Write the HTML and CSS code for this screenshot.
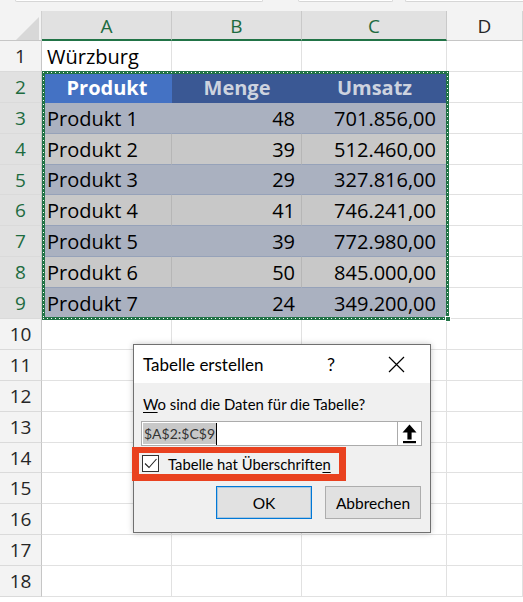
FILE: index.html
```html
<!DOCTYPE html>
<html lang="de">
<head>
<meta charset="utf-8">
<title>Tabelle erstellen</title>
<link rel="stylesheet" href="styles.css">
</head>
<body>
<div class="topbar"><span class="tb tb1"></span><span class="tb tb2"></span><span class="tb tb3"></span></div>
<div class="sheet">
  <div class="corner"><svg width="42" height="30" viewBox="0 0 42 30"><polygon points="16,29 39,29 39,6" fill="#d8d8d8"/></svg></div>
  <div class="ch sel">A</div><div class="ch sel">B</div><div class="ch sel">C</div><div class="ch">D</div>

  <div class="rh">1</div><div class="c">Würzburg</div><div class="c"></div><div class="c"></div><div class="c"></div>
  <div class="rh sel">2</div><div class="c th active">Produkt</div><div class="c th">Menge</div><div class="c th">Umsatz</div><div class="c"></div>
  <div class="rh sel">3</div><div class="c b1">Produkt 1</div><div class="c b1 num">48</div><div class="c b1 num numc">701.856,00</div><div class="c"></div>
  <div class="rh sel">4</div><div class="c b2">Produkt 2</div><div class="c b2 num">39</div><div class="c b2 num numc">512.460,00</div><div class="c"></div>
  <div class="rh sel">5</div><div class="c b1">Produkt 3</div><div class="c b1 num">29</div><div class="c b1 num numc">327.816,00</div><div class="c"></div>
  <div class="rh sel">6</div><div class="c b2">Produkt 4</div><div class="c b2 num">41</div><div class="c b2 num numc">746.241,00</div><div class="c"></div>
  <div class="rh sel">7</div><div class="c b1">Produkt 5</div><div class="c b1 num">39</div><div class="c b1 num numc">772.980,00</div><div class="c"></div>
  <div class="rh sel">8</div><div class="c b2">Produkt 6</div><div class="c b2 num">50</div><div class="c b2 num numc">845.000,00</div><div class="c"></div>
  <div class="rh sel">9</div><div class="c b1">Produkt 7</div><div class="c b1 num">24</div><div class="c b1 num numc">349.200,00</div><div class="c"></div>
  <div class="rh">10</div><div class="c"></div><div class="c"></div><div class="c"></div><div class="c"></div>
  <div class="rh">11</div><div class="c"></div><div class="c"></div><div class="c"></div><div class="c"></div>
  <div class="rh">12</div><div class="c"></div><div class="c"></div><div class="c"></div><div class="c"></div>
  <div class="rh">13</div><div class="c"></div><div class="c"></div><div class="c"></div><div class="c"></div>
  <div class="rh">14</div><div class="c"></div><div class="c"></div><div class="c"></div><div class="c"></div>
  <div class="rh">15</div><div class="c"></div><div class="c"></div><div class="c"></div><div class="c"></div>
  <div class="rh">16</div><div class="c"></div><div class="c"></div><div class="c"></div><div class="c"></div>
  <div class="rh">17</div><div class="c"></div><div class="c"></div><div class="c"></div><div class="c"></div>
  <div class="rh">18</div><div class="c"></div><div class="c"></div><div class="c"></div><div class="c"></div>

  <div class="marquee"><span class="handle"></span></div>
</div>

<div class="dialog">
  <div class="dlg-title">
    <span class="ttl">Tabelle erstellen</span>
    <span class="help">?</span>
    <svg class="close" width="17" height="17" viewBox="0 0 17 17"><path d="M1 1 L16 16 M16 1 L1 16" stroke="#000" stroke-width="1.2" fill="none"/></svg>
  </div>
  <div class="dlg-body">
    <div class="lbl"><u>W</u>o sind die Daten für die Tabelle?</div>
    <div class="field">
      <span class="seltext">$A$2:$C$9</span><span class="caret"></span>
      <span class="pick"><svg width="15" height="20" viewBox="0 0 15 20"><path d="M7.5 0.5 L14.5 8.5 L9.6 8.5 L9.6 15.5 L5.4 15.5 L5.4 8.5 L0.5 8.5 Z" fill="#000"/><rect x="1" y="17" width="13" height="2.2" fill="#000"/></svg></span>
    </div>
    <div class="hl">
      <span class="cb"><svg width="15" height="15" viewBox="0 0 15 15"><path d="M2 7.5 L6 11.5 L13.5 3" stroke="#222" stroke-width="1.1" fill="none"/></svg></span>
      <span class="cbl">Tabelle hat Überschrifte<u>n</u></span>
    </div>
    <div class="btns">
      <button class="btn ok">OK</button>
      <button class="btn">Abbrechen</button>
    </div>
  </div>
</div>
</body>
</html>
```

FILE: styles.css
```css
* { box-sizing: border-box; }
html, body { margin: 0; padding: 0; }
body {
  width: 523px;
  height: 602px;
  overflow: hidden;
  background: #fff;
  font-family: "Open Sans", "Liberation Sans", sans-serif;
  position: relative;
}

.topbar {
  height: 11px;
  background: #f3f3f3;
  display: flex;
  align-items: flex-start;
}
.tb {
  height: 2px;
  background: #fff;
  border: 1px solid #d6d6d6;
  border-top: 0;
  border-radius: 0 0 3px 3px;
}
.tb1 { margin-left: 15px; width: 248px; }
.tb2 { margin-left: 35px; width: 95px; }
.tb3 { margin-left: 12px; flex: 1; border-right: 0; border-radius: 0 0 0 3px; }

.sheet {
  position: relative;
  display: grid;
  grid-template-columns: 42px 130px 130px 145px 1fr;
  grid-template-rows: 30px repeat(18, 30.9px);
  font-size: 20px;
  color: #000;
}

.corner {
  background: #f3f3f3;
  border-right: 1px solid #d0d0d0;
  border-bottom: 1px solid #c6c6c6;
  overflow: hidden;
}
.corner svg { display: block; }

.ch {
  display: flex;
  align-items: center;
  justify-content: center;
  font-size: 19px;
  color: #262626;
  background: #f3f3f3;
  border-right: 1px solid #d4d4d4;
  border-bottom: 1px solid #c6c6c6;
  padding-top: 1px;
}
.ch.sel {
  background: #e1e1e1;
  color: #1d6b40;
  border-right-color: #c9c9c9;
  border-bottom: 2px solid #217346;
  padding-top: 2px;
}

.rh {
  display: flex;
  align-items: center;
  justify-content: center;
  font-size: 19px;
  color: #262626;
  background: #f3f3f3;
  border-right: 1px solid #c6c6c6;
  border-bottom: 1px solid #dadada;
}
.rh.sel {
  background: #e1e1e1;
  color: #1d6b40;
}

.c {
  display: flex;
  align-items: flex-end;
  padding: 0 4px 2px 5px;
  line-height: 24px;
  white-space: nowrap;
  border-right: 1px solid #e1e1e1;
  border-bottom: 1px solid #e1e1e1;
}
.num { justify-content: flex-end; padding-right: 6px; }
.numc { padding-right: 10px; }

.th {
  justify-content: center;
  font-weight: 700;
  color: #cdd3df;
  background: #3a5894;
  border-right-color: #3a5894;
  border-bottom-color: #3a5894;
}
.th.active {
  color: #fff;
  background: #4472c4;
  border-right-color: #4472c4;
  border-bottom-color: #4472c4;
}
.b1 {
  background: #aab1c0;
  border-right-color: #aab1c0;
  border-bottom-color: #96a2b9;
}
.b2 {
  background: #c8c8c8;
  border-right-color: #b6b6b6;
  border-bottom-color: #96a2b9;
}

.marquee {
  position: absolute;
  left: 42px;
  top: 60px;
  width: 407px;
  height: 249px;
  border: 3px solid #217346;
  pointer-events: none;
}
.marquee::after {
  content: "";
  position: absolute;
  inset: -2px;
  background:
    repeating-linear-gradient(90deg, #fff 0 1px, transparent 1px 4px) top left / 100% 1px no-repeat,
    repeating-linear-gradient(90deg, #fff 0 1px, transparent 1px 4px) bottom left / 100% 1px no-repeat,
    repeating-linear-gradient(180deg, #fff 0 1px, transparent 1px 4px) top left / 1px 100% no-repeat,
    repeating-linear-gradient(180deg, #fff 0 1px, transparent 1px 4px) top right / 1px 100% no-repeat;
}
.handle {
  position: absolute;
  right: -5px;
  bottom: -5px;
  width: 6px;
  height: 6px;
  background: #217346;
  border: 1px solid #fff;
  z-index: 1;
}

/* dialog */
.dialog {
  position: absolute;
  left: 133px;
  top: 344px;
  width: 298px;
  height: 189px;
  border: 1px solid #707070;
  box-shadow: 0 0 6px rgba(0, 0, 0, 0.22);
  background: #f0f0f0;
  font-family: Lato, "Open Sans", sans-serif;
  font-size: 15px;
  color: #000;
  display: flex;
  flex-direction: column;
}
.dlg-title {
  height: 38px;
  background: #fff;
  display: flex;
  align-items: center;
  padding-left: 9px;
}
.ttl { flex: 1; font-size: 17px; }
.help { width: 12px; margin-right: 49px; font-size: 18px; }
.close { margin-right: 25px; display: block; }

.dlg-body {
  flex: 1;
  display: flex;
  flex-direction: column;
  padding: 12px 8px 0 7px;
}
.lbl { padding-left: 2px; line-height: 19px; font-size: 14.9px; }
.lbl u { text-underline-offset: 2px; }

.field {
  margin-top: 7px;
  height: 25px;
  background: #fff;
  border: 1px solid #ababab;
  display: flex;
  align-items: center;
}
.seltext {
  margin-left: 1px;
  height: 21px;
  line-height: 21px;
  padding: 0 1px;
  background: #c8c8c8;
  color: #333;
  font-size: 14px;
}
.caret {
  width: 1px;
  height: 22px;
  background: #000;
}
.pick {
  margin: -1px -1px -1px auto;
  width: 25px;
  height: 25px;
  background: #fff;
  border: 1px solid #ababab;
  display: flex;
  align-items: center;
  justify-content: center;
}
.pick svg { display: block; }

.hl {
  margin-top: 1px;
  margin-left: -9px;
  width: 214px;
  height: 34px;
  border: 7px solid #e9411f;
  border-top-width: 6px;
  display: flex;
  align-items: center;
}
.cb {
  margin-left: 3px;
  width: 17px;
  height: 17px;
  border: 1px solid #333;
  background: #fff;
  display: flex;
  align-items: center;
  justify-content: center;
}
.cb svg { display: block; }
.cbl { margin-left: 9px; white-space: nowrap; font-size: 14.8px; }
.cbl u { text-underline-offset: 2px; }

.btns {
  margin-top: 5px;
  margin-right: 1px;
  display: flex;
  justify-content: flex-end;
  gap: 13px;
}
.btn {
  width: 96px;
  height: 33px;
  background: #e1e1e1;
  border: 1px solid #adadad;
  font-family: Lato, "Open Sans", sans-serif;
  font-size: 15.5px;
  color: #000;
  padding: 0;
}
.btn.ok {
  border-color: #0078d7;
  box-shadow: inset 0 0 0 1px rgba(0, 120, 215, 0.25);
}
```
